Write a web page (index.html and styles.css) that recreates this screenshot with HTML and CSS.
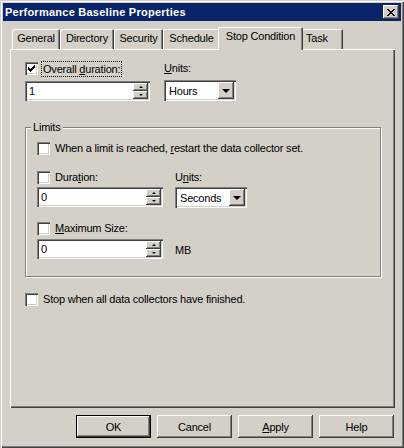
FILE: index.html
```html
<!DOCTYPE html>
<html>
<head>
<meta charset="utf-8">
<link rel="stylesheet" href="styles.css">
</head>
<body>
<div class="window">
  <div class="titlebar">
    <span class="title">Performance Baseline Properties</span>
    <span class="close"><svg width="8" height="7" viewBox="0 0 8 7" shape-rendering="crispEdges"><path d="M0 0h2v1h-2zM6 0h2v1h-2zM1 1h2v1h-2zM5 1h2v1h-2zM2 2h4v1h-4zM3 3h2v1h-2zM2 4h4v1h-4zM1 5h2v1h-2zM5 5h2v1h-2zM0 6h2v1h-2zM6 6h2v1h-2z" fill="#000"/></svg></span>
  </div>
  <div class="body">
    <div class="tabs">
      <div class="tab t-general">General</div>
      <div class="tab t-directory">Directory</div>
      <div class="tab t-security">Security</div>
      <div class="tab t-schedule">Schedule</div>
      <div class="tab active t-stop">Stop Condition</div>
      <div class="tab t-task">Task</div>
    </div>
    <div class="panel">
      <div class="top">
        <div class="col-a">
          <div class="check">
            <span class="box"><svg width="7" height="7" viewBox="0 0 7 7" shape-rendering="crispEdges"><path d="M6 0h1v3h-1zM5 1h1v3h-1zM4 2h1v3h-1zM3 3h1v3h-1zM2 4h1v3h-1zM1 3h1v3h-1zM0 2h1v3h-1z" fill="#000"/></svg></span>
            <span class="txt focus">Overall <u>d</u>uration:</span>
          </div>
          <div class="edit spin-edit e1">
            <span class="val">1</span>
            <span class="spin"><span class="sb"><i class="up"></i></span><span class="sb"><i class="down"></i></span></span>
          </div>
        </div>
        <div class="col-b">
          <div class="lbl"><u>U</u>nits:</div>
          <div class="edit combo c1">
            <span class="val">Hours</span>
            <span class="drop"><i class="arrow"></i></span>
          </div>
        </div>
      </div>

      <div class="group">
        <span class="legend">Limits</span>
        <div class="check">
          <span class="box"></span>
          <span class="txt">When a limit is reached, <u>r</u>estart the data collector set.</span>
        </div>
        <div class="pair">
          <div class="col-c">
            <div class="check">
              <span class="box"></span>
              <span class="txt">Dura<u>t</u>ion:</span>
            </div>
            <div class="edit spin-edit e2">
              <span class="val">0</span>
              <span class="spin"><span class="sb"><i class="up"></i></span><span class="sb"><i class="down"></i></span></span>
            </div>
          </div>
          <div class="col-d">
            <div class="lbl">U<u>n</u>its:</div>
            <div class="edit combo c2">
              <span class="val">Seconds</span>
              <span class="drop"><i class="arrow"></i></span>
            </div>
          </div>
        </div>
        <div class="check c-max">
          <span class="box"></span>
          <span class="txt"><u>M</u>aximum Size:</span>
        </div>
        <div class="size-row">
          <div class="edit spin-edit e3">
            <span class="val">0</span>
            <span class="spin"><span class="sb"><i class="up"></i></span><span class="sb"><i class="down"></i></span></span>
          </div>
          <span class="mb">MB</span>
        </div>
      </div>

      <div class="check c-stop">
        <span class="box"></span>
        <span class="txt">Stop when all data collectors have finished.</span>
      </div>
    </div>
    <div class="buttons">
      <div class="btn default">OK</div>
      <div class="btn">Cancel</div>
      <div class="btn"><u>A</u>pply</div>
      <div class="btn">Help</div>
    </div>
  </div>
</div>
</body>
</html>
```
FILE: styles.css
```css
* { box-sizing: border-box; }
html, body { margin: 0; padding: 0; }
body {
  width: 404px;
  height: 448px;
  overflow: hidden;
  background: #d4d0c8;
  font-family: "Liberation Sans", Arial, sans-serif;
  font-size: 11px;
  letter-spacing: -0.2px;
  color: #000;
}
u { text-decoration: underline; text-underline-offset: 1px; }

.window {
  width: 404px;
  height: 448px;
  padding: 3px;
  display: flex;
  flex-direction: column;
  background: #d4d0c8;
  box-shadow: inset 1px 1px #d4d0c8, inset 2px 2px #fff, inset -1px -1px #404040, inset -2px -2px #808080;
}

.titlebar {
  height: 18px;
  flex: none;
  background: #0a246a;
  display: flex;
  align-items: center;
  justify-content: space-between;
  padding: 0 2px 0 2px;
}
.title {
  color: #fff;
  font-weight: bold;
  font-size: 11px;
  letter-spacing: 0.25px;
}
.close {
  width: 16px;
  height: 14px;
  background: #d4d0c8;
  display: flex;
  align-items: center;
  justify-content: center;
  padding-right: 1px;
  box-shadow: inset -1px -1px #404040, inset 1px 1px #fff, inset -2px -2px #808080;
}

.body {
  flex: 1;
  display: flex;
  flex-direction: column;
  padding: 6px 6px 0 7px;
}

.tabs {
  height: 22px;
  display: flex;
  align-items: flex-end;
  padding-left: 2px;
  position: relative;
  z-index: 1;
}
.tab {
  height: 20px;
  line-height: 19px;
  text-align: center;
  background: #d4d0c8;
  border-radius: 2px 2px 0 0;
  box-shadow: inset 1px 1px #fff, inset -1px 0 #404040, inset -2px 0 #808080;
  white-space: nowrap;
}
.t-general { width: 48px; }
.t-directory { width: 54px; }
.t-security { width: 49px; }
.t-schedule { width: 57px; }
.t-task { width: 42px; text-align: left; padding-left: 5px; }
.tab.active {
  width: 85px;
  height: 23px;
  margin: 0 -2px -1px -2px;
  line-height: 18px;
  position: relative;
  z-index: 2;
  box-shadow: inset 1px 1px #fff, inset -1px 0 #404040, inset -2px 0 #808080;
}

.panel {
  height: 359px;
  flex: none;
  padding: 13px 0 0 15px;
  box-shadow: inset 1px 1px #fff, inset -1px -1px #404040, inset -2px -2px #808080;
}

.check {
  display: flex;
  align-items: center;
  height: 13px;
  gap: 4px;
}
.box {
  width: 13px;
  height: 13px;
  flex: none;
  background: #fff;
  display: flex;
  align-items: center;
  justify-content: center;
  box-shadow: inset 1px 1px #808080, inset 2px 2px #404040, inset -1px -1px #fff, inset -2px -2px #d4d0c8;
}
.txt {
  padding: 0 1px;
  line-height: 13px;
  white-space: nowrap;
}
.focus {
  outline: 1px dotted #000;
  outline-offset: 0;
  line-height: 14px;
}

.top { display: flex; }
.col-a { width: 139px; }
.col-b { display: flex; flex-direction: column; }
.lbl { height: 13px; line-height: 13px; white-space: nowrap; }

.edit {
  background: #fff;
  display: flex;
  align-items: center;
  padding: 2px;
  box-shadow: inset 1px 1px #808080, inset 2px 2px #404040, inset -1px -1px #fff, inset -2px -2px #d4d0c8;
}
.edit .val { flex: 1; padding-left: 2px; line-height: 14px; }
.e1 { width: 125px; height: 20px; margin-top: 6px; }
.e2 { width: 126px; height: 20px; margin-top: 3px; }
.e3 { width: 126px; height: 20px; }
.c1 { width: 72px; height: 21px; margin-top: 5px; }
.c2 { width: 72px; height: 21px; margin-top: 3px; }

.spin {
  width: 15px;
  height: 16px;
  display: flex;
  flex-direction: column;
}
.sb {
  flex: 1;
  background: #d4d0c8;
  display: flex;
  align-items: center;
  justify-content: center;
  box-shadow: inset -1px -1px #404040, inset 1px 1px #fff, inset -2px -2px #808080;
}
.up, .down {
  width: 0;
  height: 0;
  border-left: 2px solid transparent;
  border-right: 2px solid transparent;
}
.up { border-bottom: 2px solid #000; margin-top: -1px; }
.down { border-top: 2px solid #000; margin-top: -1px; }

.combo .val { padding-left: 3px; }
.drop {
  width: 16px;
  height: 17px;
  background: #d4d0c8;
  display: flex;
  align-items: center;
  justify-content: center;
  box-shadow: inset -1px -1px #404040, inset 1px 1px #fff, inset -2px -2px #808080;
}
.arrow {
  width: 0;
  height: 0;
  border-left: 4px solid transparent;
  border-right: 4px solid transparent;
  border-top: 4px solid #000;
  margin-left: -1px;
}

.group {
  position: relative;
  width: 356px;
  height: 150px;
  margin-top: 26px;
  padding: 14px 0 0 11px;
  border: 1px solid #808080;
  box-shadow: inset 1px 1px #fff, 1px 1px #fff;
}
.legend {
  position: absolute;
  left: 5px;
  top: -7px;
  padding: 0 2px;
  line-height: 13px;
  background: #d4d0c8;
}
.pair { display: flex; margin-top: 16px; }
.col-c { width: 138px; }
.col-d { display: flex; flex-direction: column; }
.c-max { margin-top: 14px; }
.size-row { display: flex; align-items: center; margin-top: 4px; gap: 12px; }
.mb { line-height: 13px; margin-top: 2px; }

.c-stop { margin-top: 16px; }

.buttons {
  display: flex;
  justify-content: flex-end;
  gap: 6px;
  margin-top: 7px;
  padding-right: 1px;
}
.btn {
  width: 75px;
  height: 23px;
  display: flex;
  align-items: center;
  justify-content: center;
  box-shadow: inset -1px -1px #404040, inset 1px 1px #fff, inset -2px -2px #808080;
}
.btn.default {
  box-shadow: inset 0 0 0 1px #000, inset -2px -2px #404040, inset 2px 2px #fff, inset -3px -3px #808080;
}
```
